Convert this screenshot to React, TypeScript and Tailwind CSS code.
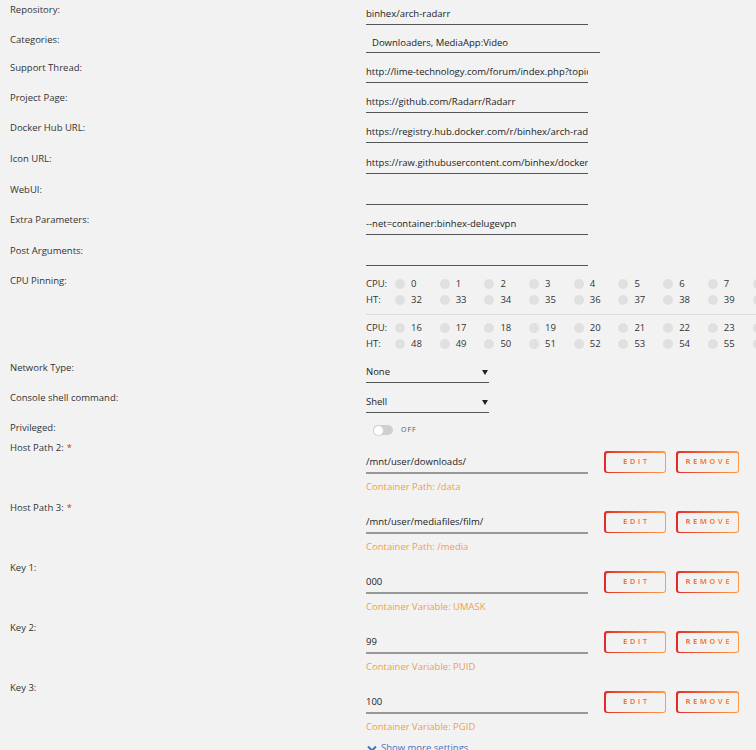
const font = { fontFamily: '"Open Sans", "DejaVu Sans", sans-serif' };

const topRows = [
  { label: 'Repository:', value: 'binhex/arch-radarr' },
  { label: 'Categories:', value: 'Downloaders, MediaApp:Video', categories: true },
  { label: 'Support Thread:', value: 'http://lime-technology.com/forum/index.php?topic=45811.0' },
  { label: 'Project Page:', value: 'https://github.com/Radarr/Radarr' },
  { label: 'Docker Hub URL:', value: 'https://registry.hub.docker.com/r/binhex/arch-radarr/', tall: true },
  { label: 'Icon URL:', value: 'https://raw.githubusercontent.com/binhex/docker-templates/master/binhex/images/radarr-icon.png', tall: true },
  { label: 'WebUI:', value: '' },
  { label: 'Extra Parameters:', value: '--net=container:binhex-delugevpn', tall: true },
  { label: 'Post Arguments:', value: '' },
];

const configs = [
  { label: 'Host Path 2:', required: true, value: '/mnt/user/downloads/', hint: 'Container Path: /data' },
  { label: 'Host Path 3:', required: true, value: '/mnt/user/mediafiles/film/', hint: 'Container Path: /media' },
  { label: 'Key 1:', value: '000', hint: 'Container Variable: UMASK' },
  { label: 'Key 2:', value: '99', hint: 'Container Variable: PUID' },
  { label: 'Key 3:', value: '100', hint: 'Container Variable: PGID' },
];

function TextRow({ label, value, categories, tall }: { label: string; value: string; categories?: boolean; tall?: boolean }) {
  if (categories) {
    return (
      <div className="flex h-[28px]">
        <div className="w-[356px] shrink-0 leading-5">{label}</div>
        <div className="mt-1 h-[19px] w-[234px] border-b border-[#555] pl-[6px] leading-[18px] text-[#222]">
          {value}
        </div>
      </div>
    );
  }
  return (
    <div className={`flex ${tall ? 'h-[31px]' : 'h-[30px]'}`}>
      <div className="w-[356px] shrink-0 leading-5">{label}</div>
      <div className="mt-1 h-[21px] w-[222px] overflow-hidden whitespace-nowrap border-b border-[#555] leading-5 text-[#222]">
        {value}
      </div>
    </div>
  );
}

function CpuRow({ name, nums }: { name: string; nums: number[] }) {
  return (
    <div className="flex h-4 items-center leading-4">
      <span className="w-[29px] shrink-0">{name}</span>
      {nums.map((n) => (
        <div key={n} className="flex w-[44.7px] shrink-0 items-center">
          <span className="h-[10px] w-[10px] rounded-full bg-[#e0e0e0]" />
          <span className="ml-[6px]">{n}</span>
        </div>
      ))}
    </div>
  );
}

function range(start: number) {
  return Array.from({ length: 9 }, (_, i) => start + i);
}

function SelectRow({ label, value }: { label: string; value: string }) {
  return (
    <div className="flex h-[30px]">
      <div className="w-[356px] shrink-0 leading-5">{label}</div>
      <div className="mt-1 flex h-[21px] w-[123px] items-center justify-between border-b border-[#555] leading-5 text-[#222]">
        <span>{value}</span>
        <svg width="6" height="5" viewBox="0 0 6 5" className="mr-[1px]">
          <path d="M0 0 L6 0 L3 5 Z" fill="#222" />
        </svg>
      </div>
    </div>
  );
}

function GradButton({ text, width }: { text: string; width: string }) {
  return (
    <div className={`h-[22px] rounded-[3px] bg-gradient-to-r from-[#e22828] to-[#ff9a45] p-[1.5px] ${width}`}>
      <div className="flex h-full w-full items-center justify-center rounded-[2px] bg-[#f2f2f2]">
        <span className="bg-gradient-to-r from-[#f06a3c] to-[#ff8c38] bg-clip-text pl-[2.5px] text-[7.5px] font-bold tracking-[2.5px] text-transparent">
          {text}
        </span>
      </div>
    </div>
  );
}

function ConfigRow({ label, required, value, hint }: { label: string; required?: boolean; value: string; hint: string }) {
  return (
    <div className="flex h-[60px]">
      <div className="w-[356px] shrink-0 leading-5">
        {label}
        {required && <span className="ml-[3px] text-[#e22828]">*</span>}
      </div>
      <div className="flex flex-col">
        <div className="flex items-start">
          <div className="mt-[14px] h-[22px] w-[222px] border-b-2 border-[#999] leading-5 text-[#222]">{value}</div>
          <div className="ml-[16px] mt-[13px] flex gap-[10px]">
            <GradButton text="EDIT" width="w-[62px]" />
            <GradButton text="REMOVE" width="w-[63px]" />
          </div>
        </div>
        <div className="mt-[3px] leading-5 text-[#f0a048]">{hint}</div>
      </div>
    </div>
  );
}

export default function App() {
  return (
    <div
      style={font}
      className="h-[750px] w-[756px] overflow-hidden bg-[#f2f2f2] pl-[10px] text-[9.5px] text-[#333]"
    >
      {topRows.map((r) => (
        <TextRow key={r.label} {...r} />
      ))}

      <div className="flex h-[87px]">
        <div className="w-[356px] shrink-0 leading-5">CPU Pinning:</div>
        <div className="min-w-0 flex-1 pt-[5px]">
          <CpuRow name="CPU:" nums={range(0)} />
          <CpuRow name="HT:" nums={range(32)} />
          <div className="mt-[6px] w-[420px] border-t border-[#dcdcdc]" />
          <div className="mt-[5px]">
            <CpuRow name="CPU:" nums={range(16)} />
            <CpuRow name="HT:" nums={range(48)} />
          </div>
        </div>
      </div>

      <SelectRow label="Network Type:" value="None" />
      <SelectRow label="Console shell command:" value="Shell" />

      <div className="flex h-5">
        <div className="w-[356px] shrink-0 leading-5">Privileged:</div>
        <div className="ml-[7px] mt-[4px] flex items-center">
          <div className="relative h-[10px] w-[20px] rounded-full bg-[#cfcfcf]">
            <div className="absolute left-0 top-[-0.5px] h-[11px] w-[11px] rounded-full border border-[#d0d0d0] bg-white" />
          </div>
          <span className="ml-[8px] text-[7px] tracking-[1px] text-[#555]">OFF</span>
        </div>
      </div>

      {configs.map((c) => (
        <ConfigRow key={c.label} {...c} />
      ))}

      <div className="flex h-5 items-center pl-[357px] text-[#4a70c0]">
        <svg width="10" height="7" viewBox="0 0 10 7">
          <path d="M1 1.5 L5 5.5 L9 1.5" fill="none" stroke="#4a70c0" strokeWidth="2" />
        </svg>
        <span className="ml-[4px]">Show more settings</span>
      </div>
    </div>
  );
}
